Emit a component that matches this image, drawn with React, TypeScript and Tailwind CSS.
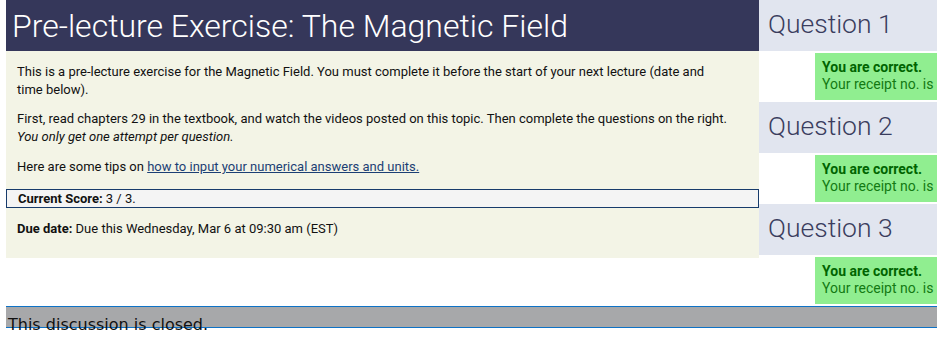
const questions = ["Question 1", "Question 2", "Question 3"];

function QuestionBlock({ title }: { title: string }) {
  return (
    <div>
      <div className="flex h-[51px] items-center bg-[#e1e5ef] pb-[3px] pl-[9px] text-[26.5px] font-light text-[#3a3d5e]">
        {title}
      </div>
      <div className="my-[2px] ml-[56px] h-[47px] whitespace-nowrap bg-[#90ee90] pl-[7px] pt-[6px] text-[14px] leading-[17px]">
        <p className="font-bold text-[#006400]">You are correct.</p>
        <p className="text-[#137a13]">Your receipt no. is</p>
      </div>
    </div>
  );
}

export default function App() {
  return (
    <div className="h-[345px] w-[937px] overflow-hidden bg-white font-['Roboto',sans-serif]">
      <div className="flex pl-[6px]">
        <div className="w-[753px] shrink-0">
          <div className="flex h-[51px] items-center bg-[#35375a] px-[6px] text-[32px] font-light text-white">
            Pre-lecture Exercise: The Magnetic Field
          </div>
          <div className="h-[207px] bg-[#f3f4e6] pt-[12px] text-[13px] leading-[17.5px] text-[#111]">
            <p className="w-[720px] px-[11px]">
              This is a pre-lecture exercise for the Magnetic Field. You must complete it before the start of your next
              lecture (date and time below).
            </p>
            <p className="mt-[12px] w-[740px] px-[11px]">
              First, read chapters 29 in the textbook, and watch the videos posted on this topic. Then complete the
              questions on the right. <br />
              <i>You only get one attempt per question.</i>
            </p>
            <p className="mt-[13px] px-[11px]">
              Here are some tips on{" "}
              <a href="#" className="text-[#1c3f74] underline">
                how to input your numerical answers and units.
              </a>
            </p>
            <div className="mt-[13px] h-[19px] border border-[#173b6b] bg-[#f4f4f4] pl-[11px] leading-[17px]">
              <b>Current Score:</b> 3 / 3.
            </div>
            <p className="mt-[12px] px-[11px]">
              <b>Due date:</b> Due this Wednesday, Mar 6 at 09:30 am (EST)
            </p>
          </div>
        </div>
        <div className="w-[178px] shrink-0 overflow-hidden">
          {questions.map((q) => (
            <QuestionBlock key={q} title={q} />
          ))}
        </div>
      </div>
      <div className="ml-[6px] h-[22px] w-[931px] border-y border-[#0e72c6] bg-[#a7a8aa]">
        <p className="whitespace-nowrap pl-[2px] pt-[8px] font-['DejaVu_Sans',sans-serif] text-[16px] leading-[19px] text-[#111]">
          This discussion is closed.
        </p>
      </div>
    </div>
  );
}
